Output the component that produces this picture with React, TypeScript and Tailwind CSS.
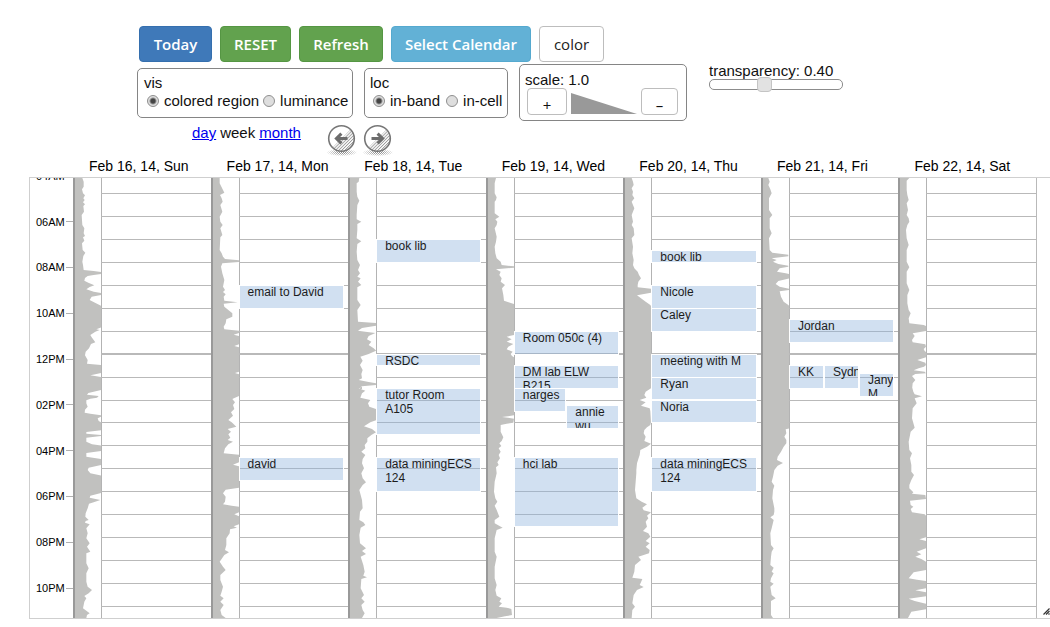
import { useState } from "react";

type CalEvent = {
  title: string;
  start: number;
  end: number;
  /** Horizontal slot inside the day: index and number of slots side by side. */
  slot?: [number, number];
};

type Day = {
  label: string;
  trace: [string, string];
  events: CalEvent[];
};

const FIRST_HOUR = 4;
const HOURS = 20;

const hours = Array.from({ length: HOURS }, (_, i) => FIRST_HOUR + i + 1);
const timeLabels = ["04AM", "06AM", "08AM", "10AM", "12PM", "02PM", "04PM", "06PM", "08PM", "10PM"];

// Activity samples as "time:level" pairs, first part of the day and second part of the day.
const days: Day[] = [
  {
    label: "Feb 16, 14, Sun",
    trace: [
      "84:26 95:30 110:30 118:25 130:28 136:34 145:29 150:33 157:28 163:34 168:29 185:31 195:24 225:26 235:32 250:30 258:34 262:28 272:32 280:25 300:27 308:35 318:29 335:26 345:28 360:30 363:60 366:83 372:83 375:60 378:42 384:34 392:32 398:44 406:62 411:48 418:38 425:60 429:83 435:83 440:54 450:48 458:64 468:83 532:83 538:68 540:78 545:65 555:50 562:54 570:60 577:65 582:52 595:46 605:36 616:34 630:42 641:40 645:83 669:83 673:65 676:50 681:83 720:83",
      "15:83 20:60 24:44 29:40 33:75 38:70 41:50 46:38 55:38 65:42 74:34 83:33 86:50 91:83 95:83 100:72 108:75 112:83 136:83 141:38 146:38 150:83 153:83 158:38 170:38 178:55 182:83 198:83 204:38 215:38 222:83 240:83 248:45 255:42 265:50 272:83 324:83 332:50 338:48 345:80 352:60 356:46 370:42 385:36 395:35 405:45 408:36 413:34 418:48 430:38 445:42 460:38 475:48 485:40 500:50 505:38 535:38 550:45 565:38 590:38 605:42 615:55 625:45 633:32 640:38 650:32 670:28 685:48 690:40 699:38",
    ],
    events: [],
  },
  {
    label: "Feb 17, 14, Mon",
    trace: [
      "84:24 100:24 120:34 128:38 135:25 145:30 155:33 165:26 185:32 200:24 215:26 225:33 235:26 255:32 262:26 300:24 310:30 320:34 327:40 331:82 336:82 340:32 350:28 370:32 390:38 410:34 420:40 426:34 433:42 440:36 452:38 457:78 461:36 470:38 480:50 490:62 500:62 508:44 520:42 530:36 538:38 542:82 549:82 554:66 558:82 583:82 588:68 592:82 665:82 669:70 673:82 720:82",
      "33:82 38:70 42:62 52:70 60:64 72:68 82:58 92:64 105:50 112:60 125:74 132:48 140:58 148:50 158:56 165:48 170:64 178:50 190:40 205:36 209:82 232:82 239:64 244:82 308:82 314:42 325:34 335:42 350:40 358:34 362:60 365:82 382:82 388:68 394:82 418:82 424:66 428:76 433:55 445:54 460:44 480:44 495:40 502:52 510:38 530:24 545:34 555:42 570:26 585:26 605:34 620:30 632:26 640:36 650:26 660:36 675:26 690:30 699:42",
    ],
    events: [
      { title: "email to David", start: 9, end: 10 },
      { title: "david", start: 16.5, end: 17.5 },
    ],
  },
  {
    label: "Feb 18, 14, Tue",
    trace: [
      "84:32 95:30 100:24 125:24 140:26 152:32 165:26 195:24 208:24 215:38 222:26 240:26 265:24 274:38 282:26 305:24 330:26 345:34 360:28 370:34 380:26 385:36 395:28 405:38 412:26 450:26 465:36 480:26 515:28 519:82 527:82 534:40 542:28 545:50 549:80 558:60 568:55 575:68 585:60 595:75 602:83 612:60 620:35 632:42 645:34 660:42 672:38 685:40 690:30 696:60 700:83 705:83 709:40 714:32 720:40",
      "5:40 10:30 17:50 25:40 38:35 45:65 55:58 65:62 72:82 105:83 112:65 124:46 132:70 142:82 150:68 160:56 170:56 180:48 190:50 200:38 210:50 222:42 235:40 250:46 265:38 280:42 292:52 300:42 315:32 330:36 345:40 370:42 380:34 405:32 412:44 420:50 428:36 450:32 475:34 490:52 498:40 507:52 515:36 540:44 560:48 572:44 577:55 582:38 610:36 630:46 640:38 650:48 660:38 675:42 685:48 699:40",
    ],
    events: [
      { title: "book lib", start: 7, end: 8 },
      { title: "RSDC", start: 12, end: 12.5 },
      { title: "tutor Room\nA105", start: 13.5, end: 15.5 },
      { title: "data miningECS\n124", start: 16.5, end: 18 },
    ],
  },
  {
    label: "Feb 19, 14, Wed",
    trace: [
      "84:28 100:24 130:24 142:30 150:28 155:24 190:24 200:38 208:26 215:32 225:30 235:24 260:30 275:28 290:24 310:26 325:30 335:42 345:45 349:82 353:82 358:28 365:42 375:38 385:45 395:42 405:55 415:46 435:50 452:52 458:70 462:82 555:82 560:60 568:75 575:60 582:80 590:65 598:60 605:78 612:72 618:76 622:82 720:82",
      "75:82 91:82 96:46 101:82 113:80 116:60 120:42 140:42 157:50 168:45 175:38 183:44 190:36 200:42 210:36 220:40 232:32 240:36 247:28 265:30 290:24 320:22 340:26 350:32 362:24 375:30 395:38 405:24 415:24 428:48 435:30 460:24 500:24 515:30 545:24 580:24 600:30 615:26 632:30 640:44 650:38 655:46 665:36 668:60 672:74 690:76 694:55 699:30",
    ],
    events: [
      { title: "Room 050c (4)", start: 11, end: 12 },
      { title: "DM lab ELW\nB215", start: 12.5, end: 13.5 },
      { title: "narges", start: 13.5, end: 14.5, slot: [0, 2] },
      { title: "annie\nwu", start: 14.25, end: 15.25, slot: [1, 2] },
      { title: "hci lab", start: 16.5, end: 19.5 },
    ],
  },
  {
    label: "Feb 20, 14, Thu",
    trace: [
      "84:24 95:28 105:30 115:24 125:28 135:26 145:32 155:24 175:32 195:24 215:28 225:24 235:30 255:32 265:24 290:28 310:26 330:30 345:28 355:32 365:42 375:46 385:52 395:44 405:42 412:42 416:82 428:82 436:40 445:52 455:66 465:80 468:82 720:82",
      "10:82 20:66 30:62 38:68 45:48 52:66 62:52 70:78 78:80 112:82 120:80 127:70 135:62 145:60 155:66 168:62 176:82 185:70 195:50 210:48 222:44 235:40 255:38 265:38 290:36 315:34 340:38 350:54 358:70 368:56 376:60 382:82 392:70 400:74 410:66 425:70 438:58 445:74 455:80 468:66 475:78 485:66 495:78 505:76 515:44 525:52 540:34 560:32 578:26 582:56 592:52 600:48 606:60 615:40 630:30 655:26 665:34 675:26 699:24",
    ],
    events: [
      { title: "book lib", start: 7.5, end: 8 },
      { title: "Nicole", start: 9, end: 10 },
      { title: "Caley", start: 10, end: 11 },
      { title: "meeting with M", start: 12, end: 13 },
      { title: "Ryan", start: 13, end: 14 },
      { title: "Noria", start: 14, end: 15 },
      { title: "data miningECS\n124", start: 16.5, end: 18 },
    ],
  },
  {
    label: "Feb 21, 14, Fri",
    trace: [
      "84:20 95:24 105:20 118:26 130:30 145:22 180:22 195:32 205:24 235:24 250:30 265:22 300:24 308:32 314:80 319:80 325:30 330:45 335:34 342:50 347:80 350:80 355:54 365:46 370:72 372:83 385:83 393:50 402:42 410:54 416:82 420:82 424:54 440:58 455:66 465:80 468:83 720:83",
      "130:83 133:72 145:74 155:68 165:74 175:74 185:66 200:58 215:48 225:46 234:64 242:48 255:38 275:34 290:30 302:38 315:34 340:32 370:38 380:38 390:36 397:26 405:36 430:30 445:26 480:28 490:36 500:30 515:28 540:26 548:36 560:30 565:36 580:28 590:26 596:36 605:26 630:30 640:42 648:28 690:28 699:34",
    ],
    events: [
      { title: "Jordan", start: 10.5, end: 11.5 },
      { title: "KK", start: 12.5, end: 13.5, slot: [0, 3] },
      { title: "Sydney", start: 12.5, end: 13.5, slot: [1, 3] },
      { title: "Jany\nM", start: 12.85, end: 13.85, slot: [2, 3] },
    ],
  },
  {
    label: "Feb 22, 14, Sat",
    trace: [
      "84:32 92:24 120:24 135:26 150:30 160:24 180:28 195:24 205:30 215:32 225:26 240:22 265:24 285:30 300:24 335:24 352:32 365:24 400:24 420:32 435:26 460:26 480:30 490:36 505:30 520:32 525:75 528:82 543:82 550:42 558:48 570:40 577:42 583:80 590:82 597:75 603:78 606:82 622:82 630:56 638:80 645:82 650:76 655:60 661:45 665:78 670:82 672:50 678:40 690:50 700:42 720:40",
      "5:40 20:44 28:48 34:70 40:48 55:54 70:42 100:40 128:48 140:36 170:30 195:32 205:40 220:34 240:38 260:38 270:46 285:38 300:32 310:32 322:44 326:40 330:80 342:82 347:34 360:36 365:44 372:36 382:40 388:78 392:82 457:82 463:62 468:82 490:82 500:54 508:68 515:50 522:68 530:82 555:82 562:45 570:38 580:30 584:55 588:82 610:82 616:50 622:82 634:82 641:30 648:48 656:82 673:82 680:38 699:28",
    ],
    events: [],
  },
];

const PART_OFFSETS = [-84, 621];

function tracePoints(trace: [string, string]) {
  const edge = trace.flatMap((part, i) =>
    part.split(" ").map((pair) => {
      const [time, level] = pair.split(":").map(Number);
      return `${level},${time + PART_OFFSETS[i]}`;
    }),
  );
  return ["0,0", ...edge, "0,1320"].join(" ");
}

function ActivityBand({ trace }: { trace: [string, string] }) {
  return (
    <svg
      className="block h-full w-[28px] shrink-0"
      viewBox="-2 0 84 1320"
      preserveAspectRatio="none"
      aria-hidden="true"
    >
      <polygon points={tracePoints(trace)} fill="#c1c1bf" />
    </svg>
  );
}

function EventBox({ event }: { event: CalEvent }) {
  const [index, count] = event.slot ?? [0, 1];
  return (
    <div
      className="absolute -mt-px overflow-hidden border border-white bg-[rgba(140,177,220,0.4)] bg-clip-padding pl-[8px] text-[12px] leading-[14px] whitespace-pre text-[#1c1c1c]"
      style={{
        top: `${((event.start - FIRST_HOUR) / HOURS) * 100}%`,
        height: `calc(${((event.end - event.start) / HOURS) * 100}% + 1px)`,
        left: `${(index / count) * 100}%`,
        width: `${100 / count}%`,
      }}
    >
      <div className="-mt-px">{event.title}</div>
    </div>
  );
}

function DayColumn({ day }: { day: Day }) {
  return (
    <div className="relative flex h-full min-w-0 flex-1">
      <div className="absolute inset-y-0 left-0 w-[2px] bg-[#999999]" />
      <ActivityBand trace={day.trace} />
      <div className="relative h-full min-w-0 flex-1">
        <div className="absolute inset-y-0 left-0 w-px bg-[#808080]/60" />
        <div className="relative -mt-[7px] grid h-[459px] auto-rows-fr">
          {hours.map((hour) => (
            <div
              key={hour}
              className={hour === 12 ? "border-b-2 border-[#b9b9b9]" : "border-b border-[#b9b9b9]"}
            />
          ))}
          <div className="absolute inset-y-0 left-0 w-[96%]">
            {day.events.map((event) => (
              <EventBox key={`${event.title}${event.start}`} event={event} />
            ))}
          </div>
        </div>
      </div>
    </div>
  );
}

function ArrowIcon({ id, left }: { id: string; left?: boolean }) {
  return (
    <svg className="block h-[34px] w-[30px]" viewBox="0 0 30 34" aria-hidden="true">
      <defs>
        <pattern id={`${id}-hatch`} width="2.2" height="2.2" patternUnits="userSpaceOnUse" patternTransform="rotate(45)">
          <rect width="0.9" height="2.2" fill="#9a9a9a" />
        </pattern>
        <pattern id={`${id}-dots`} width="2" height="2" patternUnits="userSpaceOnUse">
          <rect width="1" height="1" fill="#888" />
          <rect x="1" y="1" width="1" height="1" fill="#888" />
        </pattern>
        <radialGradient id={`${id}-fade`}>
          <stop offset="0.2" stopColor="#fff" />
          <stop offset="1" stopColor="#fff" stopOpacity="0.1" />
        </radialGradient>
        <mask id={`${id}-mask`}>
          <ellipse cx="15" cy="28.5" rx="15" ry="3.5" fill={`url(#${id}-fade)`} />
        </mask>
      </defs>
      <rect y="24" width="30" height="9" fill={`url(#${id}-dots)`} mask={`url(#${id}-mask)`} />
      <circle cx="14.5" cy="14.5" r="13" fill="#fff" />
      <path d="M23.7 5.3A13 13 0 0 1 5.3 23.7Z" fill={`url(#${id}-hatch)`} />
      <circle cx="14.5" cy="14.5" r="12.8" fill="none" stroke="#777" strokeWidth="1.6" />
      <path
        d="M8.5 14.5H19.5M14.6 9.6L19.6 14.5L14.6 19.4"
        transform={left ? "translate(29 0) scale(-1 1)" : undefined}
        fill="none"
        stroke="#6c6c6c"
        strokeWidth="3"
      />
    </svg>
  );
}

function Radio({
  name,
  label,
  checked,
  onChange,
}: {
  name: string;
  label: string;
  checked: boolean;
  onChange: () => void;
}) {
  return (
    <label className="flex items-center gap-[5px]">
      <input
        type="radio"
        name={name}
        checked={checked}
        onChange={onChange}
        className="h-[12px] w-[12px] appearance-none rounded-full border border-[#8f8f8f] bg-[#dedede] checked:bg-[radial-gradient(circle,#444_0px,#444_2px,#dedede_4px)]"
      />
      {label}
    </label>
  );
}

const actionBase =
  "h-[36px] rounded-[4px] border font-['Open_Sans',sans-serif] text-[15px] leading-[20px] whitespace-nowrap";

export default function App() {
  const [vis, setVis] = useState("colored region");
  const [loc, setLoc] = useState("in-band");
  const [transparency, setTransparency] = useState(0.4);

  return (
    <div className="bg-white font-['Liberation_Sans',Arial,sans-serif] text-[#111]">
      <div className="flex gap-2 pt-[26px] pl-[139px]">
        <button className={`${actionBase} w-[73px] border-[#356fae] bg-[#3f79b9] font-semibold text-white`}>Today</button>
        <button className={`${actionBase} w-[71px] border-[#559643] bg-[#62a24e] font-semibold text-white`}>RESET</button>
        <button className={`${actionBase} w-[84px] border-[#559643] bg-[#62a24e] font-semibold text-white`}>Refresh</button>
        <button className={`${actionBase} w-[140px] border-[#55a9cf] bg-[#62b1d6] font-semibold text-white`}>
          Select Calendar
        </button>
        <button className={`${actionBase} w-[65px] border-[#bdbdbd] bg-white text-[#222]`}>color</button>
      </div>

      <div className="mt-[2px] flex h-[57px] items-start pl-[137px] text-[15px] leading-[18px]">
        <fieldset className="mt-[4px] h-[50px] w-[216px] rounded-[5px] border border-[#858585] pt-[5px] pl-[6px]">
          <div>vis</div>
          <div className="flex gap-[4px] pl-[3px] whitespace-nowrap">
            <Radio name="vis" label="colored region" checked={vis === "colored region"} onChange={() => setVis("colored region")} />
            <Radio name="vis" label="luminance" checked={vis === "luminance"} onChange={() => setVis("luminance")} />
          </div>
        </fieldset>
        <fieldset className="mt-[4px] ml-[11px] h-[50px] w-[144px] rounded-[5px] border border-[#858585] pt-[5px] pl-[5px]">
          <div>loc</div>
          <div className="flex gap-[6px] pl-[3px] whitespace-nowrap">
            <Radio name="loc" label="in-band" checked={loc === "in-band"} onChange={() => setLoc("in-band")} />
            <Radio name="loc" label="in-cell" checked={loc === "in-cell"} onChange={() => setLoc("in-cell")} />
          </div>
        </fieldset>
        <div className="ml-[11px] h-[57px] w-[168px] rounded-[5px] border border-[#858585] pt-[6px] pl-[5px]">
          <div className="leading-[17px]">scale: 1.0</div>
          <div className="flex items-start pl-[2px]">
            <button aria-label="Zoom in" className="h-[27px] w-[40px] rounded-[4px] border border-[#bdbdbd] pt-[6px] font-['Open_Sans',sans-serif] text-[15px] leading-[18px]">
              +
            </button>
            <svg className="mt-[5px] ml-[4px] block h-[21px] w-[66px]" viewBox="0 0 66 21" aria-hidden="true">
              <path d="M0 0L66 21H0Z" fill="#999" />
            </svg>
            <button aria-label="Zoom out" className="ml-[4px] h-[27px] w-[37px] rounded-[4px] border border-[#bdbdbd] pt-[6px] font-['Open_Sans',sans-serif] text-[15px] leading-[18px]">
              –
            </button>
          </div>
        </div>
        <label className="ml-[22px] flex w-[134px] flex-col whitespace-nowrap">
          <span className="-mt-[2px]">transparency: {transparency.toFixed(2)}</span>
          <input
            type="range"
            min={0}
            max={1}
            step={0.01}
            value={transparency}
            onChange={(e) => setTransparency(Number(e.target.value))}
            className="-mt-px h-[11px] w-full appearance-none rounded-[5px] border border-[#8c8c8c] bg-white [&::-webkit-slider-thumb]:h-[15px] [&::-webkit-slider-thumb]:w-[15px] [&::-webkit-slider-thumb]:appearance-none [&::-webkit-slider-thumb]:rounded-[4px] [&::-webkit-slider-thumb]:border [&::-webkit-slider-thumb]:border-[#c4c4c4] [&::-webkit-slider-thumb]:bg-[#e2e2e2]"
          />
        </label>
      </div>

      <div className="flex h-[36px] items-start gap-[26px] pt-[3px] pl-[192px] text-[15px]">
        <nav className="flex gap-[4px] leading-[18px]">
          <a href="#day" className="text-[#0000ee] underline">day</a>
          <span>week</span>
          <a href="#month" className="text-[#0000ee] underline">month</a>
        </nav>
        <div className="flex gap-[6px]">
          <button aria-label="Previous week"><ArrowIcon id="prev" left /></button>
          <button aria-label="Next week"><ArrowIcon id="next" /></button>
        </div>
      </div>

      <div className="flex h-[20px] pr-[13px] pl-[74px] text-[14px] leading-[18px] text-black">
        {days.map((day) => (
          <div key={day.label} className="min-w-0 flex-1 pl-[15px] whitespace-nowrap">
            {day.label}
          </div>
        ))}
      </div>

      <div className="relative ml-[29px] flex h-[442px] overflow-hidden border-y border-l border-[#cfcfcf] pr-[13px]">
        <div className="-mt-[25px] grid h-[458px] w-[43px] shrink-0 auto-rows-fr text-[11px] leading-[12px] text-black">
          {timeLabels.map((label) => (
            <div key={label} className="flex items-center justify-between pl-[6px]">
              {label}
              <span className="h-px w-[7px] bg-[#b0b0b0]" />
            </div>
          ))}
        </div>
        <div className="flex min-w-0 flex-1 border-r border-[#b9b9b9]">
          {days.map((day) => (
            <DayColumn key={day.label} day={day} />
          ))}
        </div>
        <svg className="absolute right-0 bottom-[3px] h-[7px] w-[7px]" viewBox="0 0 7 7" aria-hidden="true">
          <path d="M0.5 6.5L6.5 0.5M3 6.5L6.5 3M5.5 6.5L6.5 5.5" stroke="#333" strokeWidth="1.2" />
        </svg>
      </div>
    </div>
  );
}
